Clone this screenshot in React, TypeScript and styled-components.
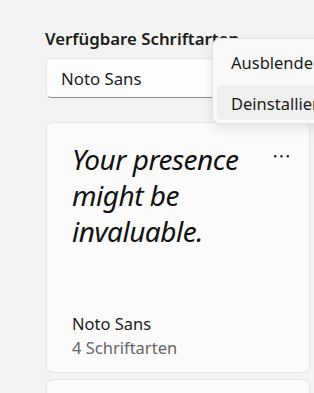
import React from "react";
import styled, { createGlobalStyle } from "styled-components";

const Global = createGlobalStyle`
  html, body { margin: 0; padding: 0; }
  body {
    background: #f3f3f3;
    font-family: "Noto Sans", "Open Sans", sans-serif;
    color: #1a1a1a;
    overflow: hidden;
  }
`;

const Root = styled.div`
  position: relative;
  width: 314px;
  height: 393px;
  overflow: hidden;
`;

const Column = styled.div`
  display: flex;
  flex-direction: column;
  padding: 28px 4px 0 46px;
  width: 264px;
`;

const Heading = styled.h2`
  margin: 0 0 8px -1px;
  font-size: 16.8px;
  font-weight: 600;
  line-height: 22px;
  color: #1b1b1b;
  white-space: nowrap;
`;

const Combo = styled.div`
  box-sizing: border-box;
  height: 40px;
  width: 210px;
  display: flex;
  align-items: center;
  padding-left: 14px;
  background: #fdfdfd;
  border: 1px solid #e6e6e6;
  border-bottom-color: #8a8a8a;
  border-radius: 5px;
  font-size: 16.8px;
  color: #1b1b1b;
`;

const CardList = styled.div`
  display: flex;
  flex-direction: column;
  gap: 6px;
  margin-top: 24px;
`;

const Card = styled.div<{ $h: number }>`
  box-sizing: border-box;
  height: ${(p) => p.$h}px;
  background: #fbfbfb;
  border: 1px solid #e5e5e5;
  border-radius: 7px;
  padding: 18px 17px 12px 25px;
  display: flex;
  flex-direction: column;
  justify-content: space-between;
`;

const CardTop = styled.div`
  display: flex;
  justify-content: space-between;
  align-items: flex-start;
`;

const Sample = styled.div`
  font-family: "Noto Sans", sans-serif;
  font-style: italic;
  font-size: 28px;
  letter-spacing: -0.5px;
  line-height: 36px;
  color: #111;
  width: 190px;
`;

const More = styled.svg`
  margin-top: 12px;
  flex: none;
`;

const Name = styled.div`
  font-size: 16.5px;
  line-height: 24px;
  color: #1b1b1b;
`;

const Sub = styled.div`
  font-size: 16.5px;
  line-height: 24px;
  color: #666;
`;

const Flyout = styled.div`
  position: absolute;
  left: 212px;
  top: 38px;
  width: 150px;
  box-sizing: border-box;
  padding: 5px 4px 3px;
  display: flex;
  flex-direction: column;
  gap: 6px;
  background: #f9f9f9;
  border: 1px solid #e2e2e2;
  border-radius: 8px;
  box-shadow: 0 4px 12px rgba(0, 0, 0, 0.1);
`;

const MenuItem = styled.div<{ $active?: boolean }>`
  height: 35px;
  display: flex;
  align-items: center;
  padding: 2px 0 0 14px;
  box-sizing: border-box;
  border-radius: 5px;
  font-size: 16.5px;
  color: #1b1b1b;
  white-space: nowrap;
  background: ${(p) => (p.$active ? "#efefef" : "transparent")};
`;

export default function App() {
  return (
    <Root>
      <Global />
      <Column>
        <Heading>Verfügbare Schriftarten</Heading>
        <Combo>Noto Sans</Combo>
        <CardList>
          <Card $h={251}>
            <CardTop>
              <Sample>Your presence might be invaluable.</Sample>
              <More width="20" height="6" viewBox="0 0 20 6">
                <rect x="2" y="2" width="2.4" height="2.4" rx="1" fill="#222" />
                <rect x="8.3" y="2" width="2.4" height="2.4" rx="1" fill="#222" />
                <rect x="14.6" y="2" width="2.4" height="2.4" rx="1" fill="#222" />
              </More>
            </CardTop>
            <div>
              <Name>Noto Sans</Name>
              <Sub>4 Schriftarten</Sub>
            </div>
          </Card>
          <Card $h={120} />
        </CardList>
      </Column>
      <Flyout>
        <MenuItem>Ausblenden</MenuItem>
        <MenuItem $active>Deinstallieren</MenuItem>
      </Flyout>
    </Root>
  );
}
